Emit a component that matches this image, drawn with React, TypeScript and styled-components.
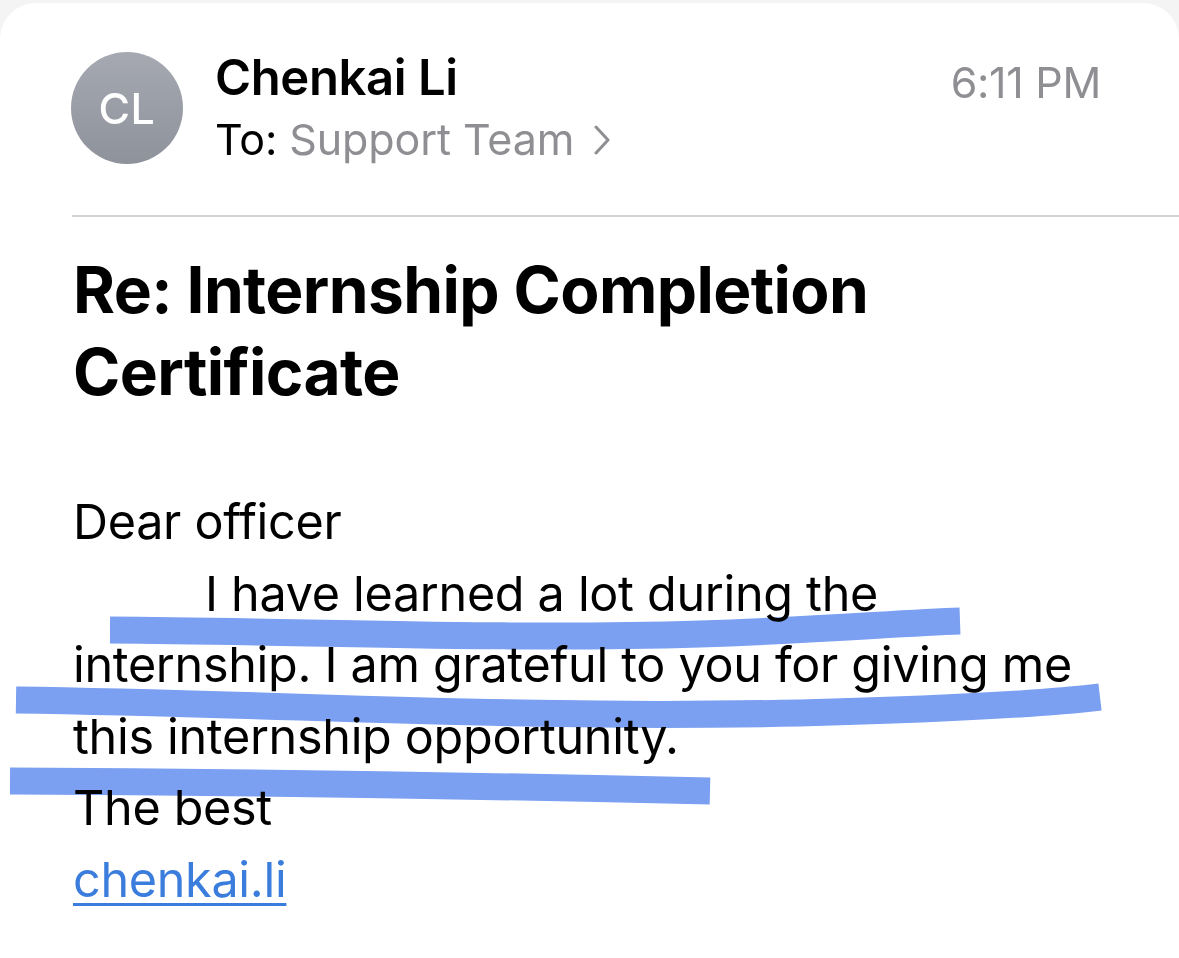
import styled, { createGlobalStyle } from "styled-components";

const GlobalStyle = createGlobalStyle`
  html, body {
    margin: 0;
    padding: 0;
    background: #f4f4f5;
  }
  body {
    font-family: Inter, "Noto Sans", "Liberation Sans", sans-serif;
    color: #000;
    -webkit-font-smoothing: antialiased;
  }
`;

const Card = styled.div`
  position: relative;
  margin-top: 3px;
  min-height: 955px;
  background: #fff;
  border-radius: 36px 36px 0 0;
  overflow: hidden;
`;

const Header = styled.header`
  display: flex;
  align-items: flex-start;
  padding: 49px 78px 0 71px;
  height: 162px;
  box-sizing: border-box;
`;

const Avatar = styled.div`
  flex: 0 0 112px;
  width: 112px;
  height: 112px;
  border-radius: 50%;
  background: linear-gradient(180deg, #a6a9b2 0%, #8e929b 100%);
  color: #fff;
  display: flex;
  align-items: center;
  justify-content: center;
  font-size: 43px;
  font-weight: 500;
  letter-spacing: 0.5px;
`;

const Sender = styled.div`
  flex: 1;
  margin-left: 32px;
  display: flex;
  flex-direction: column;
`;

const Name = styled.div`
  font-size: 49px;
  font-weight: 600;
  line-height: 56px;
  letter-spacing: -0.4px;
  margin-top: -2px;
`;

const Recipient = styled.div`
  display: flex;
  align-items: center;
  margin-top: 8px;
  font-size: 43px;
  line-height: 50px;
  letter-spacing: -0.1px;
`;

const Muted = styled.span<{ $gap?: number }>`
  color: #8e8e93;
  margin-left: ${({ $gap }) => $gap ?? 0}px;
`;

const Chevron = styled.svg`
  margin-left: 20px;
  margin-top: 2px;
`;

const Time = styled.div`
  font-size: 43px;
  line-height: 56px;
  color: #8e8e93;
  letter-spacing: -0.3px;
  margin-top: 2px;
`;

const Divider = styled.hr`
  margin: 50px 0 0 72px;
  border: 0;
  border-top: 2px solid #d3d3d7;
`;

const Subject = styled.h1`
  margin: 32px 73px 0;
  font-size: 64px;
  font-weight: 700;
  line-height: 82px;
  letter-spacing: -0.6px;
`;

const Body = styled.div`
  margin: 73px 73px 0;
  font-size: 48.5px;
  line-height: 71.6px;
  letter-spacing: -0.3px;
  white-space: nowrap;
`;

const Line = styled.div<{ $indent?: number }>`
  padding-left: ${({ $indent }) => $indent ?? 0}px;
`;

const Link = styled.a`
  color: #3b7ddd;
  text-decoration: underline;
  text-decoration-thickness: 3px;
  text-underline-offset: 6px;
`;

// hand-drawn highlighter marks sitting over the message text
const Marker = styled.svg`
  position: absolute;
  inset: 0;
  width: 100%;
  height: 100%;
  pointer-events: none;
  mix-blend-mode: multiply;
`;

const strokes = [
  "M110 624 C 300 625, 500 634, 700 628 C 820 624, 900 617, 960 615",
  "M16 694 C 300 698, 500 713, 800 707 C 950 703, 1050 697, 1100 691",
  "M10 775 C 200 776, 450 779, 710 785",
];

export default function App() {
  return (
    <>
      <GlobalStyle />
      <Card>
        <Header>
          <Avatar>CL</Avatar>
          <Sender>
            <Name>Chenkai Li</Name>
            <Recipient>
              To:<Muted $gap={12}>Support Team</Muted>
              <Chevron width="16" height="30" viewBox="0 0 16 30">
                <polyline
                  points="2,2 14,15 2,28"
                  fill="none"
                  stroke="#8e8e93"
                  strokeWidth="3"
                  strokeLinecap="round"
                  strokeLinejoin="round"
                />
              </Chevron>
            </Recipient>
          </Sender>
          <Time>6:11 PM</Time>
        </Header>
        <Divider />
        <Subject>
          Re: Internship Completion
          <br />
          Certificate
        </Subject>
        <Body>
          <Line>Dear officer</Line>
          <Line $indent={132}>I have learned a lot during the</Line>
          <Line>internship. I am grateful to you for giving me</Line>
          <Line>this internship opportunity.</Line>
          <Line>The best</Line>
          <Line>
            <Link href="#">chenkai.li</Link>
          </Line>
        </Body>
        <Marker viewBox="0 -3 1179 958" preserveAspectRatio="xMinYMin slice">
          {strokes.map((d) => (
            <path
              key={d}
              d={d}
              fill="none"
              stroke="#7ba0f1"
              strokeWidth="27"
              strokeLinecap="butt"
              strokeLinejoin="round"
            />
          ))}
        </Marker>
      </Card>
    </>
  );
}
